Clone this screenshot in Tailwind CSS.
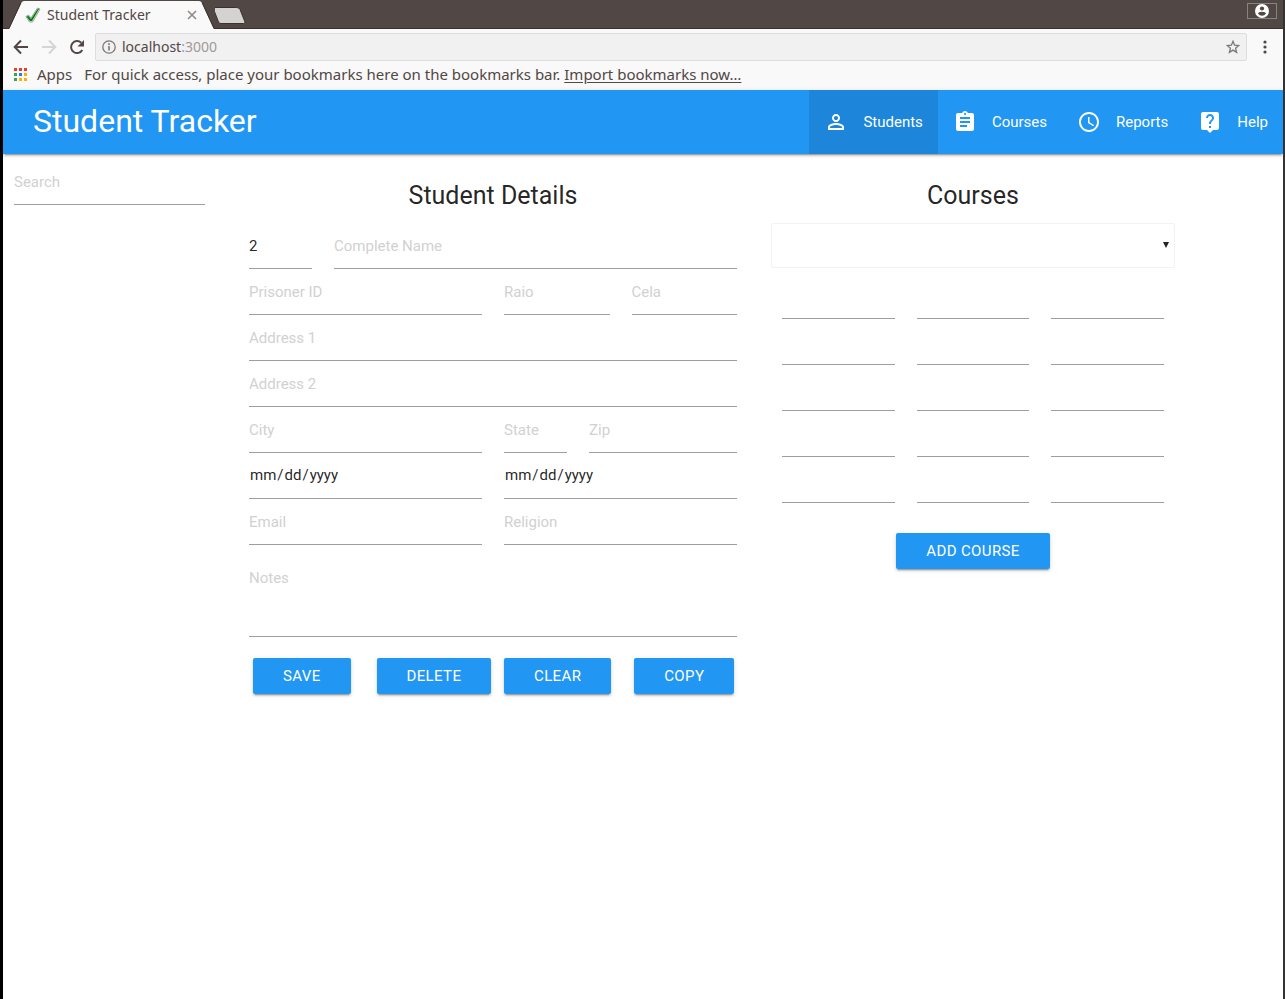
<!DOCTYPE html>
<html lang="en">
<head>
<meta charset="utf-8">
<title>Student Tracker</title>
<script src="https://cdn.jsdelivr.net/npm/@tailwindcss/browser@4"></script>
</head>
<body class="flex min-h-screen flex-col border-l-3 border-r-2 border-l-black border-r-[#333333] bg-white font-['Roboto',sans-serif] text-[15px] text-black/87">

  <!-- Browser window -->
  <header class="bg-[#f9f9f9] font-['Noto_Sans',sans-serif] text-sm text-[#514744]">
    <div class="flex h-[29px] items-start border-b border-[#3a312f] bg-[#514744]">
      <div class="relative -mb-px ml-1 h-[29px] w-[208px]">
        <svg class="absolute inset-0" width="208" height="29" viewBox="0 0 208 29" aria-hidden="true">
          <path d="M2 29 L14.500 2.500 Q15.500 1 17 1 H192 Q194 1 194.800 2.500 L207 29 Z" fill="#f9f9f9"/>
          <path d="M2 28.500 L14 2.500 M195 2.500 L207 28.500" fill="none" stroke="#3a312f" stroke-width="1"/>
        </svg>
        <div class="relative flex h-[29px] items-center pl-[18px] pr-[18px]">
          <svg class="shrink-0" width="16" height="16" viewBox="0 0 16 16" aria-hidden="true">
            <path d="M1 9.500 L3.500 8 L6 11 L12.500 1 L15 2 L7.500 15 L4.500 15 Z" fill="#d5ead6" stroke="#9aa79b" stroke-width="1"/>
            <path d="M1.500 9.500 L3.500 9 L6 12 L13 1.500 L14 2 L7 14 L5 14 Z" fill="#087a12"/>
          </svg>
          <span class="ml-[6px] flex-1 whitespace-nowrap">Student Tracker</span>
          <button type="button" aria-label="Close tab" class="flex">
            <svg width="10" height="10" viewBox="0 0 10 10"><path d="M1 1 L9 9 M9 1 L1 9" stroke="#8f8885" stroke-width="1.600"/></svg>
          </button>
        </div>
      </div>
      <button type="button" aria-label="New tab" class="mt-[7px]">
        <svg width="32" height="17" viewBox="0 0 32 17"><path d="M0 .5 H22.500 Q25 .5 26 2.500 L31 15 Q31 16.500 29.500 16.500 H7 Q5 16.500 4.500 15 L-.5 2 Z" transform="translate(-1 0)" fill="#d4d3d2" stroke="#3a312f"/></svg>
      </button>
      <button type="button" aria-label="Profile" class="ml-auto mr-[6px] mt-[3px] flex h-4 w-[30px] items-center justify-center border border-[#8a827f]">
        <svg width="14" height="14" viewBox="0 0 14 14"><circle cx="7" cy="7" r="7" fill="#fff"/><circle cx="7" cy="4.500" r="2.100" fill="#514744"/><path d="M3 9.500 Q3.500 7.800 7 7.800 T11 9.500 Q9.500 11.800 7 11.800 T3 9.500 Z" fill="#514744"/></svg>
      </button>
    </div>

    <div class="flex items-center pl-[10px] pr-4 pt-1">
      <button type="button" aria-label="Back"><svg width="16" height="16" viewBox="0 0 16 16" fill="none" stroke="#514744" stroke-width="2"><path d="M15 8 H2 M8 1.500 L1.700 8 L8 14.500"/></svg></button>
      <button type="button" aria-label="Forward" class="ml-3"><svg width="16" height="16" viewBox="0 0 16 16" fill="none" stroke="#d6d5d4" stroke-width="2"><path d="M1 8 H14 M8 1.500 L14.300 8 L8 14.500"/></svg></button>
      <button type="button" aria-label="Reload" class="ml-3"><svg width="16" height="16" viewBox="0 0 16 16"><path d="M13.300 11 A6 6 0 1 1 12.200 3.700" fill="none" stroke="#514744" stroke-width="2"/><path d="M15 1 V7.500 H8.500 Z" fill="#514744"/></svg></button>
      <div class="ml-[10px] flex h-7 flex-1 items-center rounded-xs border border-[#dddddd] bg-[#f1f1f1] pl-[6px] pr-[6px]">
        <svg class="shrink-0" width="14" height="14" viewBox="0 0 14 14"><circle cx="7" cy="7" r="6.200" fill="none" stroke="#7d7673" stroke-width="1.300"/><path d="M6.200 6 H7.800 V10.500 H6.200 Z M6.200 3.300 H7.800 V4.900 H6.200 Z" fill="#7d7673"/></svg>
        <div class="ml-[6px] flex-1 whitespace-nowrap" role="textbox" aria-label="Address">localhost<span class="text-[#a09a98]">:3000</span></div>
        <button type="button" aria-label="Bookmark this page"><svg width="14" height="14" viewBox="0 0 14 14"><path d="M7 1.300 L8.600 5.200 L12.800 5.500 L9.600 8.200 L10.600 12.400 L7 10.100 L3.400 12.400 L4.400 8.200 L1.200 5.500 L5.400 5.200 Z" fill="none" stroke="#7d7673" stroke-width="1.300"/></svg></button>
      </div>
      <button type="button" aria-label="Menu" class="ml-4"><svg width="4" height="14" viewBox="0 0 4 14" fill="#514744"><circle cx="2" cy="2" r="1.600"/><circle cx="2" cy="7" r="1.600"/><circle cx="2" cy="12" r="1.600"/></svg></button>
    </div>

    <div class="flex h-[29px] items-center whitespace-nowrap pb-0.5 pl-[11px] text-[15px]">
      <svg width="13" height="13" viewBox="0 0 13 13" aria-hidden="true">
        <path d="M0 0h3v3H0zM5 0h3v3H5zM10 0h3v3h-3z" fill="#ee3a2e"/>
        <path d="M0 5h3v3H0zM0 10h3v3H0z" fill="#34a353"/>
        <path d="M5 5h3v3H5z" fill="#2a7de9"/>
        <path d="M10 5h3v3h-3zM5 10h3v3H5zM10 10h3v3h-3z" fill="#fbb006"/>
      </svg>
      <a href="#apps" class="ml-[10px]">Apps</a>
      <span class="ml-3">For quick access, place your bookmarks here on the bookmarks bar. <a href="#import" class="underline underline-offset-2">Import bookmarks now…</a></span>
    </div>
  </header>

  <!-- Application bar -->
  <nav class="flex h-16 items-stretch justify-between bg-[#2196f3] text-white shadow-[0_2px_2px_0_rgba(0,0,0,0.14),0_1px_5px_0_rgba(0,0,0,0.12),0_3px_1px_-2px_rgba(0,0,0,0.2)]">
    <a href="#home" class="flex items-center pb-0.5 pl-[30px] text-[32px]">Student Tracker</a>
    <div class="flex">
      <a href="#students" class="flex items-center gap-[15px] bg-black/10 px-[15px]" aria-current="page">
        <svg width="24" height="24" viewBox="0 0 24 24" fill="currentColor"><path d="M12 5.900c1.160 0 2.100.94 2.100 2.100s-.94 2.100-2.100 2.100S9.900 9.160 9.900 8s.94-2.100 2.100-2.100m0 9c2.970 0 6.100 1.460 6.100 2.100v1.100H5.900V17c0-.64 3.130-2.100 6.100-2.100M12 4C9.790 4 8 5.790 8 8s1.790 4 4 4 4-1.790 4-4-1.790-4-4-4zm0 9c-2.670 0-8 1.340-8 4v3h16v-3c0-2.660-5.330-4-8-4z"/></svg>
        Students</a>
      <a href="#courses" class="flex items-center gap-[15px] px-[15px]">
        <svg width="24" height="24" viewBox="0 0 24 24" fill="currentColor"><path d="M19 3h-4.180C14.400 1.840 13.300 1 12 1c-1.300 0-2.400.84-2.820 2H5c-1.100 0-2 .9-2 2v14c0 1.100.9 2 2 2h14c1.100 0 2-.9 2-2V5c0-1.100-.9-2-2-2zm-7 0c.55 0 1 .45 1 1s-.45 1-1 1-1-.45-1-1 .45-1 1-1zm2 14H7v-2h7v2zm3-4H7v-2h10v2zm0-4H7V7h10v2z"/></svg>
        Courses</a>
      <a href="#reports" class="flex items-center gap-[15px] px-[15px]">
        <svg width="24" height="24" viewBox="0 0 24 24" fill="currentColor"><path d="M11.990 2C6.470 2 2 6.480 2 12s4.470 10 9.990 10C17.520 22 22 17.520 22 12S17.520 2 11.990 2zM12 20c-4.420 0-8-3.580-8-8s3.580-8 8-8 8 3.580 8 8-3.580 8-8 8zm.5-13H11v6l5.250 3.150.75-1.230-4.500-2.670z"/></svg>
        Reports</a>
      <a href="#help" class="flex items-center gap-[15px] px-[15px]">
        <svg width="24" height="24" viewBox="0 0 24 24" fill="currentColor"><path d="M19 2H5c-1.110 0-2 .9-2 2v14c0 1.100.89 2 2 2h4l3 3 3-3h4c1.100 0 2-.9 2-2V4c0-1.100-.9-2-2-2zm-6 16h-2v-2h2v2zm2.070-7.750l-.9.920C13.450 11.900 13 12.500 13 14h-2v-.5c0-1.100.45-2.100 1.170-2.830l1.240-1.260c.37-.36.59-.86.59-1.410 0-1.100-.9-2-2-2s-2 .9-2 2H8c0-2.210 1.790-4 4-4s4 1.790 4 4c0 .88-.36 1.680-.93 2.250z"/></svg>
        Help</a>
    </div>
  </nav>

  <main class="grid grid-cols-[213fr_22fr_510fr_23fr_404fr_108fr] items-start">
    <div class="px-[11px] pt-[5px]">
      <input type="search" aria-label="Search" placeholder="Search" class="h-[46px] w-full appearance-none border-b border-[#9e9e9e] placeholder:text-[#d1d1d1] outline-none">
    </div>

    <form class="col-start-3 min-w-0 pt-[25px]">
      <h2 class="mb-[11px] text-center text-[25px] leading-[33px]">Student Details</h2>
      <div class="grid grid-cols-12 [&_input]:h-[46px] [&_input]:w-full [&_input]:min-w-0 [&_input]:border-b [&_input]:border-[#9e9e9e] [&_input]:outline-none [&_input]:placeholder:text-[#d1d1d1] [&_input::-webkit-calendar-picker-indicator]:hidden [&>div]:min-w-0 [&>div]:px-[11px]">
        <div class="col-span-2"><input type="text" aria-label="Number" value="2"></div>
        <div class="col-span-10"><input type="text" aria-label="Complete Name" placeholder="Complete Name"></div>
        <div class="col-span-6"><input type="text" aria-label="Prisoner ID" placeholder="Prisoner ID"></div>
        <div class="col-span-3"><input type="text" aria-label="Raio" placeholder="Raio"></div>
        <div class="col-span-3"><input type="text" aria-label="Cela" placeholder="Cela"></div>
        <div class="col-span-12"><input type="text" aria-label="Address 1" placeholder="Address 1"></div>
        <div class="col-span-12"><input type="text" aria-label="Address 2" placeholder="Address 2"></div>
        <div class="col-span-6"><input type="text" aria-label="City" placeholder="City"></div>
        <div class="col-span-2"><input type="text" aria-label="State" placeholder="State"></div>
        <div class="col-span-4"><input type="text" aria-label="Zip" placeholder="Zip"></div>
        <div class="col-span-6"><input type="date" aria-label="Start date"></div>
        <div class="col-span-6"><input type="date" aria-label="End date"></div>
        <div class="col-span-6"><input type="email" aria-label="Email" placeholder="Email"></div>
        <div class="col-span-6"><input type="text" aria-label="Religion" placeholder="Religion"></div>
        <div class="col-span-12"><textarea aria-label="Notes" placeholder="Notes" class="block h-[92px] w-full resize-none overflow-hidden border-b border-[#9e9e9e] pt-6 leading-[18px] outline-none placeholder:text-[#d1d1d1]"></textarea></div>
      </div>
      <div class="mt-[21px] grid grid-cols-4 text-center text-white [&_button]:h-9 [&_button]:rounded-xs [&_button]:bg-[#2196f3] [&_button]:px-[30px] [&_button]:tracking-wide [&_button]:uppercase [&_button]:shadow-[0_2px_2px_0_rgba(0,0,0,0.14),0_1px_5px_0_rgba(0,0,0,0.12),0_3px_1px_-2px_rgba(0,0,0,0.2)] [&>div]:min-w-0 [&>div]:px-[11px]">
        <div><button type="button">Save</button></div>
        <div><button type="button">Delete</button></div>
        <div><button type="button">Clear</button></div>
        <div><button type="button">Copy</button></div>
      </div>
    </form>

    <section class="col-start-5 min-w-0 pt-[25px] text-center">
      <h2 class="mb-[11px] text-[25px] leading-[33px]">Courses</h2>
      <div class="relative">
        <select aria-label="Course" class="block h-[45px] w-full appearance-none rounded-xs border border-[#f2f2f2] bg-white/90 p-[5px] outline-none"><option></option></select>
        <svg class="pointer-events-none absolute right-[6px] top-[19px]" width="6" height="6" viewBox="0 0 6 6" aria-hidden="true"><path d="M0 0 H6 L3 6 Z" fill="#212121"/></svg>
      </div>
      <div class="mt-[5px] grid grid-cols-3 [&_input]:h-[46px] [&_input]:w-full [&_input]:min-w-0 [&_input]:border-b [&_input]:border-[#9e9e9e] [&_input]:outline-none [&>div]:px-[11px]">
        <div><input type="text" aria-label="Course 1, field 1"></div>
        <div><input type="text" aria-label="Course 1, field 2"></div>
        <div><input type="text" aria-label="Course 1, field 3"></div>
        <div><input type="text" aria-label="Course 2, field 1"></div>
        <div><input type="text" aria-label="Course 2, field 2"></div>
        <div><input type="text" aria-label="Course 2, field 3"></div>
        <div><input type="text" aria-label="Course 3, field 1"></div>
        <div><input type="text" aria-label="Course 3, field 2"></div>
        <div><input type="text" aria-label="Course 3, field 3"></div>
        <div><input type="text" aria-label="Course 4, field 1"></div>
        <div><input type="text" aria-label="Course 4, field 2"></div>
        <div><input type="text" aria-label="Course 4, field 3"></div>
        <div><input type="text" aria-label="Course 5, field 1"></div>
        <div><input type="text" aria-label="Course 5, field 2"></div>
        <div><input type="text" aria-label="Course 5, field 3"></div>
      </div>
      <button type="button" class="mt-[30px] h-9 rounded-xs bg-[#2196f3] px-[30px] tracking-wide text-white uppercase shadow-[0_2px_2px_0_rgba(0,0,0,0.14),0_1px_5px_0_rgba(0,0,0,0.12),0_3px_1px_-2px_rgba(0,0,0,0.2)]">Add Course</button>
    </section>
  </main>
</body>
</html>
